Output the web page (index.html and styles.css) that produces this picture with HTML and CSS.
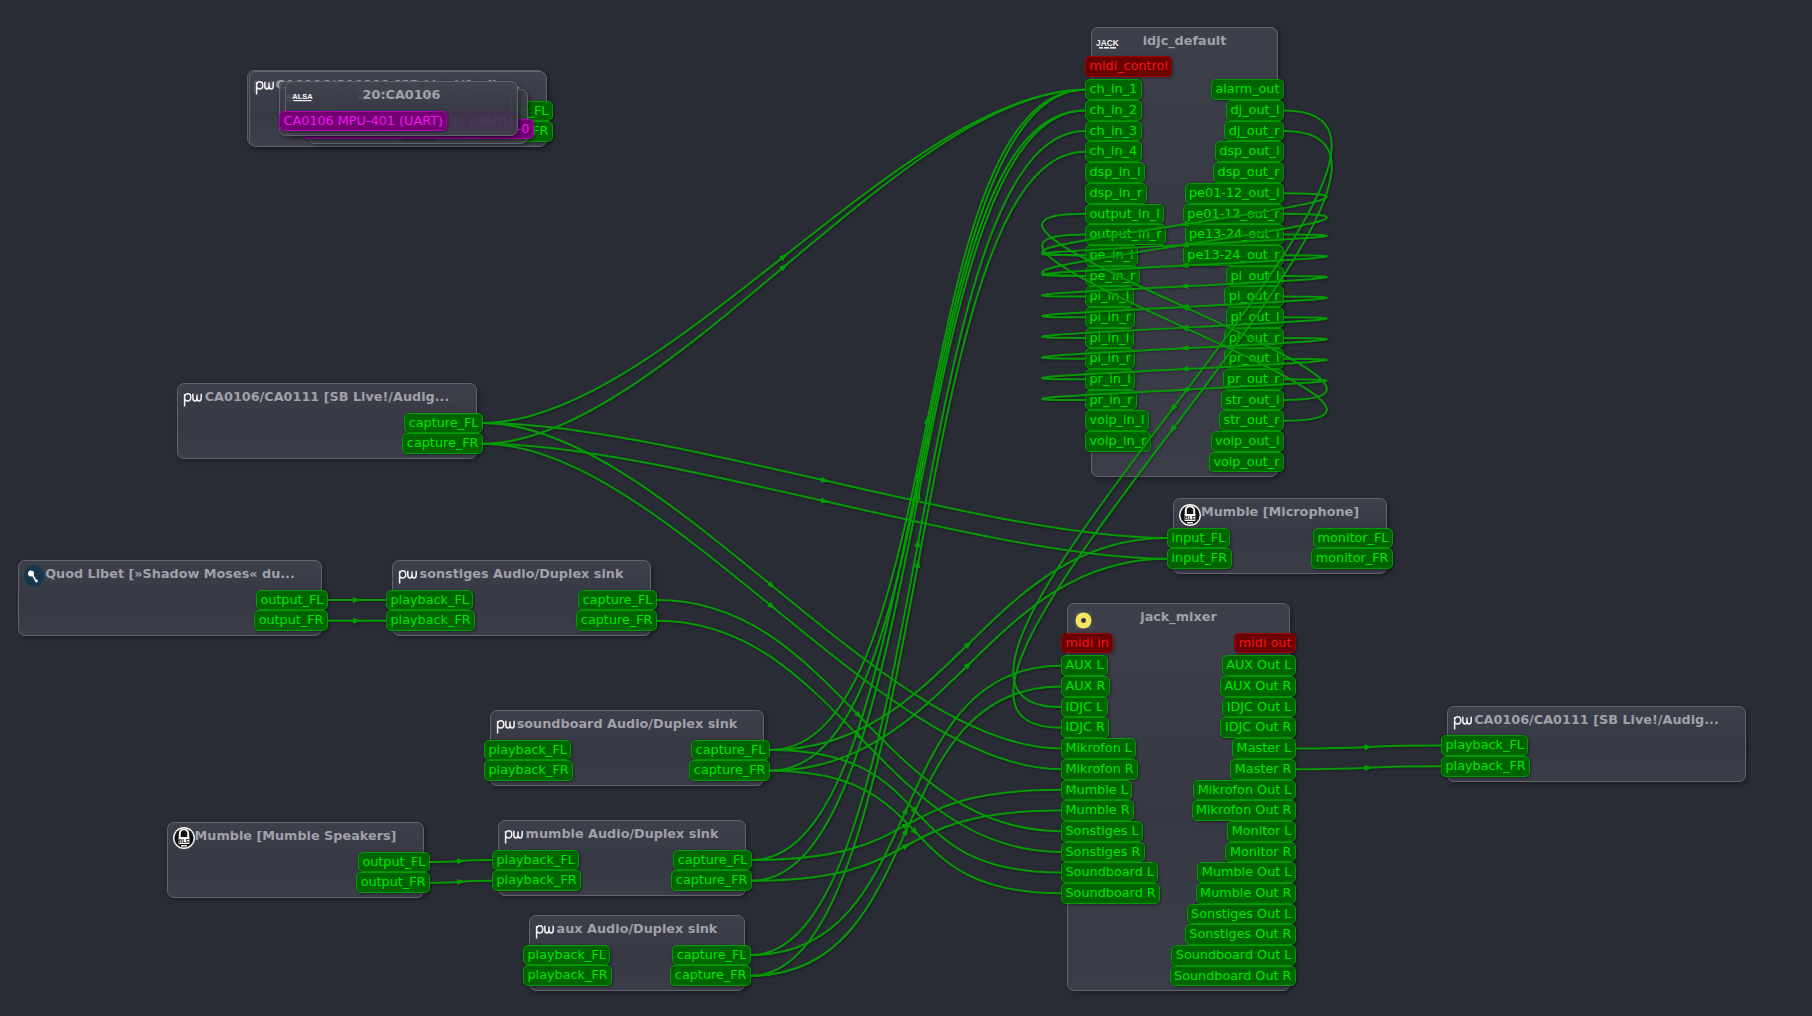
FILE: index.html
```html
<!DOCTYPE html>
<html lang="en">
<head>
    <meta charset="UTF-8">
    <title>qpwgraph</title>
    <link rel="stylesheet" href="styles.css">
</head>
<body>

    <!-- Icons -->
    <svg class="sprites" aria-hidden="true">
        <symbol id="i-pw" viewBox="0 0 19 15">
            <path d="M1.6 2V14.5M1.6 5.5C1.6 3 3 1.8 4.6 1.8S7.8 3 7.8 5.3 6.4 9 4.6 9 1.6 7.8 1.6 5.5" fill="none" stroke="#f2f2f2" stroke-width="1.5"/>
            <path d="M9.8 1.8V5.8C9.8 8 10.8 9 12 9S14 8 14 5.8V2.5M14 5.8C14 8 15 9 16.2 9S18.2 8 18.2 5.8V1.8" fill="none" stroke="#f2f2f2" stroke-width="1.5"/>
        </symbol>
        <symbol id="i-mumble" viewBox="0 0 22 22">
            <circle cx="11" cy="11" r="11" fill="#f4f4f4"/>
            <circle cx="11" cy="11" r="9.6" fill="#111"/>
            <path d="M6.8 11V6.4A4.2 4.2 0 0 1 15.2 6.4V11" fill="none" stroke="#f4f4f4" stroke-width="2"/>
            <rect x="5.6" y="10" width="10.8" height="7" fill="#fff"/>
            <rect x="8" y="18" width="6" height="1.6" fill="#ddd"/>
        </symbol>
        <symbol id="i-quod" viewBox="0 0 20 22">
            <ellipse cx="10" cy="11" rx="10" ry="11" fill="#17384c"/>
            <circle cx="7" cy="8.5" r="3" fill="#fff"/>
            <path d="M8 9L12 16" stroke="#fff" stroke-width="1.6"/>
            <circle cx="12.4" cy="16" r="1.4" fill="#fff"/>
        </symbol>
        <symbol id="i-mixer" viewBox="0 0 17 17">
            <rect width="17" height="17" rx="2" fill="#4a4c58"/>
            <circle cx="8.5" cy="8.5" r="8" fill="#f4e45e"/>
            <circle cx="8.5" cy="8.5" r="2.4" fill="#33323a"/>
        </symbol>
    </svg>

    <div class="canvas" id="canvas">

        <!-- Stacked nodes, top left -->
        <div class="node n-ca-back">
            <svg class="icon icon-pw"><use href="#i-pw"/></svg>
            <div class="title">CA0106/CA0111 [SB Live!/Audig...</div>
            <div class="ports">
                <div class="col"></div>
                <div class="col out">
                    <span class="port">capture_FL</span>
                    <span class="port">capture_FR</span>
                </div>
            </div>
        </div>
        <div class="node n-ca-back2">
            <svg class="icon icon-pw"><use href="#i-pw"/></svg>
            <div class="title">CA0106/CA0111 [SB Live!/Audig...</div>
            <div class="ports">
                <div class="col"></div>
                <div class="col out">
                    <span class="port">capture_FL</span>
                    <span class="port">capture_FR</span>
                </div>
            </div>
        </div>
        <div class="node n-midi-through">
            <svg class="icon icon-alsa" viewBox="0 0 19 10"><text x="9.5" y="7" text-anchor="middle" class="logo-text logo-alsa">ALSA</text><rect x="0.5" y="8" width="18" height="1.2" fill="#f0f0f0"/></svg>
            <div class="title">14:Midi Through</div>
            <div class="ports">
                <div class="col col-narrow"><span class="port seq">Midi Through Port-0</span></div>
                <div class="col out"><span class="port seq">Midi Through Port-0</span></div>
            </div>
        </div>
        <div class="node n-alsa-out">
            <svg class="icon icon-alsa" viewBox="0 0 19 10"><text x="9.5" y="7" text-anchor="middle" class="logo-text logo-alsa">ALSA</text><rect x="0.5" y="8" width="18" height="1.2" fill="#f0f0f0"/></svg>
            <div class="title">20:CA0106</div>
            <div class="ports">
                <div class="col"></div>
                <div class="col out"><span class="port seq">CA0106 MPU-401 (UART)</span></div>
            </div>
        </div>
        <div class="node n-alsa-in">
            <svg class="icon icon-alsa" viewBox="0 0 19 10"><text x="9.5" y="7" text-anchor="middle" class="logo-text logo-alsa">ALSA</text><rect x="0.5" y="8" width="18" height="1.2" fill="#f0f0f0"/></svg>
            <div class="title">20:CA0106</div>
            <div class="ports">
                <div class="col"><span class="port seq">CA0106 MPU-401 (UART)</span></div>
                <div class="col out"></div>
            </div>
        </div>

        <!-- idjc -->
        <div class="node n-idjc">
            <svg class="icon icon-jack" viewBox="0 0 19 12"><text x="9.5" y="8" text-anchor="middle" class="logo-text logo-jack">JACK</text><rect x="1" y="9" width="17" height="1.6" fill="#e8e8e8"/><rect x="5" y="9" width="1" height="1.6" fill="#444"/><rect x="11" y="9" width="1" height="1.6" fill="#444"/></svg>
            <div class="title">idjc_default</div>
            <div class="ports midi-row">
                <div class="col"><span class="port midi">midi_control</span></div>
            </div>
            <div class="ports">
                <div class="col">
                    <span class="port" id="idjc-ch_in_1">ch_in_1</span>
                    <span class="port" id="idjc-ch_in_2">ch_in_2</span>
                    <span class="port" id="idjc-ch_in_3">ch_in_3</span>
                    <span class="port" id="idjc-ch_in_4">ch_in_4</span>
                    <span class="port">dsp_in_l</span>
                    <span class="port">dsp_in_r</span>
                    <span class="port" id="idjc-output_in_l">output_in_l</span>
                    <span class="port" id="idjc-output_in_r">output_in_r</span>
                    <span class="port" id="idjc-pe_in_l">pe_in_l</span>
                    <span class="port" id="idjc-pe_in_r">pe_in_r</span>
                    <span class="port" id="idjc-pi_in_l">pi_in_l</span>
                    <span class="port" id="idjc-pi_in_r">pi_in_r</span>
                    <span class="port" id="idjc-pl_in_l">pl_in_l</span>
                    <span class="port" id="idjc-pl_in_r">pl_in_r</span>
                    <span class="port" id="idjc-pr_in_l">pr_in_l</span>
                    <span class="port" id="idjc-pr_in_r">pr_in_r</span>
                    <span class="port">voip_in_l</span>
                    <span class="port">voip_in_r</span>
                </div>
                <div class="col out">
                    <span class="port">alarm_out</span>
                    <span class="port" id="idjc-dj_out_l">dj_out_l</span>
                    <span class="port" id="idjc-dj_out_r">dj_out_r</span>
                    <span class="port">dsp_out_l</span>
                    <span class="port">dsp_out_r</span>
                    <span class="port" id="idjc-pe01_out_l">pe01-12_out_l</span>
                    <span class="port" id="idjc-pe01_out_r">pe01-12_out_r</span>
                    <span class="port" id="idjc-pe13_out_l">pe13-24_out_l</span>
                    <span class="port" id="idjc-pe13_out_r">pe13-24_out_r</span>
                    <span class="port" id="idjc-pi_out_l">pi_out_l</span>
                    <span class="port" id="idjc-pi_out_r">pi_out_r</span>
                    <span class="port" id="idjc-pl_out_l">pl_out_l</span>
                    <span class="port" id="idjc-pl_out_r">pl_out_r</span>
                    <span class="port" id="idjc-pr_out_l">pr_out_l</span>
                    <span class="port" id="idjc-pr_out_r">pr_out_r</span>
                    <span class="port" id="idjc-str_out_l">str_out_l</span>
                    <span class="port" id="idjc-str_out_r">str_out_r</span>
                    <span class="port">voip_out_l</span>
                    <span class="port">voip_out_r</span>
                </div>
            </div>
        </div>

        <!-- CA0106 capture -->
        <div class="node n-ca-cap">
            <svg class="icon icon-pw"><use href="#i-pw"/></svg>
            <div class="title">CA0106/CA0111 [SB Live!/Audig...</div>
            <div class="ports">
                <div class="col"></div>
                <div class="col out">
                    <span class="port" id="ca-capture_FL">capture_FL</span>
                    <span class="port" id="ca-capture_FR">capture_FR</span>
                </div>
            </div>
        </div>

        <!-- Mumble microphone -->
        <div class="node n-mic">
            <svg class="icon icon-mumble" viewBox="0 0 22 22"><use href="#i-mumble"/><text x="11" y="15.8" text-anchor="middle" class="logo-text logo-ble">BLE</text></svg>
            <div class="title">Mumble [Microphone]</div>
            <div class="ports">
                <div class="col">
                    <span class="port" id="mic-input_FL">input_FL</span>
                    <span class="port" id="mic-input_FR">input_FR</span>
                </div>
                <div class="col out">
                    <span class="port">monitor_FL</span>
                    <span class="port">monitor_FR</span>
                </div>
            </div>
        </div>

        <!-- Quod Libet -->
        <div class="node n-quod">
            <svg class="icon icon-quod"><use href="#i-quod"/></svg>
            <div class="title">Quod Libet [»Shadow Moses« du...</div>
            <div class="ports">
                <div class="col"></div>
                <div class="col out">
                    <span class="port" id="quod-output_FL">output_FL</span>
                    <span class="port" id="quod-output_FR">output_FR</span>
                </div>
            </div>
        </div>

        <!-- Duplex sinks -->
        <div class="node n-sonstiges">
            <svg class="icon icon-pw"><use href="#i-pw"/></svg>
            <div class="title">sonstiges Audio/Duplex sink</div>
            <div class="ports">
                <div class="col">
                    <span class="port" id="son-playback_FL">playback_FL</span>
                    <span class="port" id="son-playback_FR">playback_FR</span>
                </div>
                <div class="col out">
                    <span class="port" id="son-capture_FL">capture_FL</span>
                    <span class="port" id="son-capture_FR">capture_FR</span>
                </div>
            </div>
        </div>
        <div class="node n-soundboard">
            <svg class="icon icon-pw"><use href="#i-pw"/></svg>
            <div class="title">soundboard Audio/Duplex sink</div>
            <div class="ports">
                <div class="col">
                    <span class="port">playback_FL</span>
                    <span class="port">playback_FR</span>
                </div>
                <div class="col out">
                    <span class="port" id="sb-capture_FL">capture_FL</span>
                    <span class="port" id="sb-capture_FR">capture_FR</span>
                </div>
            </div>
        </div>
        <div class="node n-speakers">
            <svg class="icon icon-mumble icon-mumble-high" viewBox="0 0 22 22"><use href="#i-mumble"/><text x="11" y="15.8" text-anchor="middle" class="logo-text logo-ble">BLE</text></svg>
            <div class="title">Mumble [Mumble Speakers]</div>
            <div class="ports">
                <div class="col"></div>
                <div class="col out">
                    <span class="port" id="spk-output_FL">output_FL</span>
                    <span class="port" id="spk-output_FR">output_FR</span>
                </div>
            </div>
        </div>
        <div class="node n-mumble">
            <svg class="icon icon-pw"><use href="#i-pw"/></svg>
            <div class="title">mumble Audio/Duplex sink</div>
            <div class="ports">
                <div class="col">
                    <span class="port" id="mum-playback_FL">playback_FL</span>
                    <span class="port" id="mum-playback_FR">playback_FR</span>
                </div>
                <div class="col out">
                    <span class="port" id="mum-capture_FL">capture_FL</span>
                    <span class="port" id="mum-capture_FR">capture_FR</span>
                </div>
            </div>
        </div>
        <div class="node n-aux">
            <svg class="icon icon-pw"><use href="#i-pw"/></svg>
            <div class="title">aux Audio/Duplex sink</div>
            <div class="ports">
                <div class="col">
                    <span class="port">playback_FL</span>
                    <span class="port">playback_FR</span>
                </div>
                <div class="col out">
                    <span class="port" id="aux-capture_FL">capture_FL</span>
                    <span class="port" id="aux-capture_FR">capture_FR</span>
                </div>
            </div>
        </div>

        <!-- jack_mixer -->
        <div class="node n-mixer">
            <svg class="icon icon-mixer"><use href="#i-mixer"/></svg>
            <div class="title">jack_mixer</div>
            <div class="ports midi-row">
                <div class="col"><span class="port midi">midi in</span></div>
                <div class="col out"><span class="port midi">midi out</span></div>
            </div>
            <div class="ports">
                <div class="col">
                    <span class="port" id="mx-aux_l">AUX L</span>
                    <span class="port" id="mx-aux_r">AUX R</span>
                    <span class="port" id="mx-idjc_l">IDJC L</span>
                    <span class="port" id="mx-idjc_r">IDJC R</span>
                    <span class="port" id="mx-mik_l">Mikrofon L</span>
                    <span class="port" id="mx-mik_r">Mikrofon R</span>
                    <span class="port" id="mx-mum_l">Mumble L</span>
                    <span class="port" id="mx-mum_r">Mumble R</span>
                    <span class="port" id="mx-son_l">Sonstiges L</span>
                    <span class="port" id="mx-son_r">Sonstiges R</span>
                    <span class="port" id="mx-sb_l">Soundboard L</span>
                    <span class="port" id="mx-sb_r">Soundboard R</span>
                </div>
                <div class="col out">
                    <span class="port">AUX Out L</span>
                    <span class="port">AUX Out R</span>
                    <span class="port">IDJC Out L</span>
                    <span class="port">IDJC Out R</span>
                    <span class="port" id="mx-master_l">Master L</span>
                    <span class="port" id="mx-master_r">Master R</span>
                    <span class="port">Mikrofon Out L</span>
                    <span class="port">Mikrofon Out R</span>
                    <span class="port">Monitor L</span>
                    <span class="port">Monitor R</span>
                    <span class="port">Mumble Out L</span>
                    <span class="port">Mumble Out R</span>
                    <span class="port">Sonstiges Out L</span>
                    <span class="port">Sonstiges Out R</span>
                    <span class="port">Soundboard Out L</span>
                    <span class="port">Soundboard Out R</span>
                </div>
            </div>
        </div>

        <!-- CA0106 playback -->
        <div class="node n-ca-play">
            <svg class="icon icon-pw"><use href="#i-pw"/></svg>
            <div class="title">CA0106/CA0111 [SB Live!/Audig...</div>
            <div class="ports">
                <div class="col">
                    <span class="port" id="play-playback_FL">playback_FL</span>
                    <span class="port" id="play-playback_FR">playback_FR</span>
                </div>
            </div>
        </div>

        <svg class="wires" id="wires" width="1812" height="1016"></svg>
    </div>

    <script src="wires.js"></script>
</body>
</html>
```

FILE: styles.css
```css
* {
    box-sizing: border-box;
}

body {
    margin: 0;
    overflow: hidden;
    background: #292c35;
}

.sprites {
    position: absolute;
    width: 0;
    height: 0;
}

.canvas {
    position: relative;
    width: 1812px;
    height: 1016px;
    background: #292c35;
    font-family: "DejaVu Sans", sans-serif;
}

/* Nodes */
.node {
    position: absolute;
    border: 1px solid #62646d;
    border-radius: 7px;
    padding-bottom: 4px;
    background: linear-gradient(180deg, rgba(64, 66, 78, 0.88), rgba(56, 58, 70, 0.88) 55%, rgba(62, 64, 76, 0.88));
    box-shadow: 2px 2px 4px rgba(0, 0, 0, 0.35);
}

.title {
    height: 28.7px;
    padding-top: 4px;
    font-size: 12.8px;
    font-weight: bold;
    line-height: 18px;
    text-align: center;
    white-space: nowrap;
    color: #a0a2a9;
}

.n-ca-back { left: 247px; top: 70px; width: 298px; }
.n-ca-back2 { left: 249px; top: 71px; width: 298px; }
.n-midi-through { left: 308px; top: 89px; width: 220px; }
.n-alsa-out { left: 279px; top: 81px; width: 233px; }
.n-alsa-in { left: 285px; top: 81px; width: 233px; }
.n-idjc { left: 1091px; top: 27px; width: 187px; }
.n-ca-cap { left: 177px; top: 383px; width: 300px; }
.n-mic { left: 1173px; top: 498px; width: 214px; }
.n-quod { left: 18px; top: 560px; width: 304px; }
.n-sonstiges { left: 392px; top: 560px; width: 259px; }
.n-soundboard { left: 490px; top: 710px; width: 274px; }
.n-speakers { left: 167px; top: 822px; width: 257px; }
.n-mumble { left: 498px; top: 820px; width: 248px; }
.n-aux { left: 529px; top: 915px; width: 216px; }
.n-mixer { left: 1067px; top: 603px; width: 223px; }
.n-ca-play { left: 1447px; top: 705.5px; width: 299px; }

.n-idjc .title {
    height: 28px;
}

.n-idjc .midi-row {
    margin-bottom: 2.7px;
}

/* Ports */
.ports {
    display: flex;
    justify-content: space-between;
    margin: 0 -7px;
}

.midi-row {
    margin-bottom: 2px;
}

.col {
    display: flex;
    flex-direction: column;
    align-items: flex-start;
}

.col.out {
    align-items: flex-end;
}

.col-narrow {
    width: 0;
}

.port {
    height: 20.7px;
    padding: 0 3.5px;
    font-size: 12.8px;
    line-height: 18px;
    white-space: nowrap;
    border: 1px solid #049a04;
    border-radius: 5px;
    color: #00e600;
    background: #006400;
    box-shadow: 1px 1px 3px rgba(0, 0, 0, 0.4);
}

.port.midi {
    color: #f01818;
    background: #6a0000;
    border-color: #a00000;
}

.port.seq {
    color: #f018f0;
    background: #720072;
    border-color: #b400b4;
}

/* Icons */
.icon {
    position: absolute;
    overflow: visible;
}

.icon-pw { left: 5px; top: 8px; width: 19px; height: 15px; }
.icon-jack { left: 6px; top: 10px; width: 19px; height: 12px; }
.icon-alsa { left: 7px; top: 10px; width: 19px; height: 10px; }
.icon-mumble { left: 5px; top: 5px; width: 22px; height: 22px; }
.icon-mumble-high { top: 4px; }
.icon-quod { left: 5px; top: 4px; width: 20px; height: 22px; }
.icon-mixer { left: 7px; top: 8px; width: 17px; height: 17px; }

.logo-text {
    font-family: "Liberation Sans", sans-serif;
    font-weight: bold;
    fill: #f4f4f4;
}

.logo-jack { font-size: 8.4px; }
.logo-alsa { font-size: 7.5px; }
.logo-ble { font-size: 5.5px; fill: #111; }

/* Wires */
.wires {
    position: absolute;
    left: 0;
    top: 0;
    pointer-events: none;
    filter: drop-shadow(1px 1px 1px rgba(0, 0, 0, 0.35));
}

.wire {
    fill: none;
    stroke: #069a06;
    stroke-width: 2;
}

.wire-arrow {
    fill: #069a06;
}
```

FILE: wires.js
```js
// out port, in port
var connections = [
    ["quod-output_FL", "son-playback_FL"],
    ["quod-output_FR", "son-playback_FR"],
    ["ca-capture_FL", "idjc-ch_in_1"],
    ["ca-capture_FR", "idjc-ch_in_1"],
    ["ca-capture_FL", "mic-input_FL"],
    ["ca-capture_FR", "mic-input_FR"],
    ["ca-capture_FL", "mx-mik_l"],
    ["ca-capture_FR", "mx-mik_r"],
    ["son-capture_FL", "mx-son_l"],
    ["son-capture_FR", "mx-son_r"],
    ["sb-capture_FL", "idjc-ch_in_1"],
    ["sb-capture_FR", "idjc-ch_in_2"],
    ["sb-capture_FL", "mic-input_FL"],
    ["sb-capture_FR", "mic-input_FR"],
    ["sb-capture_FL", "mx-sb_l"],
    ["sb-capture_FR", "mx-sb_r"],
    ["spk-output_FL", "mum-playback_FL"],
    ["spk-output_FR", "mum-playback_FR"],
    ["mum-capture_FL", "idjc-ch_in_1"],
    ["mum-capture_FR", "idjc-ch_in_2"],
    ["mum-capture_FL", "mx-mum_l"],
    ["mum-capture_FR", "mx-mum_r"],
    ["aux-capture_FL", "idjc-ch_in_3"],
    ["aux-capture_FR", "idjc-ch_in_4"],
    ["aux-capture_FL", "mx-aux_l"],
    ["aux-capture_FR", "mx-aux_r"],
    ["idjc-dj_out_l", "mx-idjc_l"],
    ["idjc-dj_out_r", "mx-idjc_r"],
    ["mx-master_l", "play-playback_FL"],
    ["mx-master_r", "play-playback_FR"],
    ["idjc-pe01_out_l", "idjc-pe_in_l"],
    ["idjc-pe01_out_r", "idjc-pe_in_r"],
    ["idjc-pe13_out_l", "idjc-pe_in_l"],
    ["idjc-pe13_out_r", "idjc-pe_in_r"],
    ["idjc-pi_out_l", "idjc-pi_in_l"],
    ["idjc-pi_out_r", "idjc-pi_in_r"],
    ["idjc-pl_out_l", "idjc-pl_in_l"],
    ["idjc-pl_out_r", "idjc-pl_in_r"],
    ["idjc-pr_out_l", "idjc-pr_in_l"],
    ["idjc-pr_out_r", "idjc-pr_in_r"],
    ["idjc-str_out_l", "idjc-output_in_l"],
    ["idjc-str_out_r", "idjc-output_in_r"]
];

var svgNS = "http://www.w3.org/2000/svg";
var wires = document.getElementById("wires");

function drawWire(fromId, toId) {
    var a = document.getElementById(fromId).getBoundingClientRect();
    var b = document.getElementById(toId).getBoundingClientRect();
    var x1 = a.right, y1 = a.top + a.height / 2;
    var x2 = b.left, y2 = b.top + b.height / 2;

    // backward wires bulge out past both ports
    var k;
    if (x2 < x1) {
        k = 205 + Math.max(0, Math.abs(y2 - y1) - 200) * 0.06;
    } else {
        k = Math.min(180, (x2 - x1) * 0.6);
    }
    var cx1 = x1 + k, cx2 = x2 - k;

    var path = document.createElementNS(svgNS, "path");
    path.setAttribute("class", "wire");
    path.setAttribute("d", "M" + x1 + " " + y1 + "C" + cx1 + " " + y1 + " " + cx2 + " " + y2 + " " + x2 + " " + y2);
    wires.appendChild(path);

    // arrow head at the middle of the curve
    var mx = (x1 + 3 * cx1 + 3 * cx2 + x2) / 8;
    var my = (y1 + y2) / 2;
    var dx = x2 + cx2 - cx1 - x1;
    var dy = 2 * (y2 - y1);
    var len = Math.sqrt(dx * dx + dy * dy) || 1;
    dx /= len;
    dy /= len;

    var arrow = document.createElementNS(svgNS, "polygon");
    arrow.setAttribute("class", "wire-arrow");
    arrow.setAttribute("points", [
        (mx + dx * 5) + "," + (my + dy * 5),
        (mx - dx * 4 - dy * 3) + "," + (my - dy * 4 + dx * 3),
        (mx - dx * 4 + dy * 3) + "," + (my - dy * 4 - dx * 3)
    ].join(" "));
    wires.appendChild(arrow);
}

connections.forEach(function (c) {
    drawWire(c[0], c[1]);
});
```
